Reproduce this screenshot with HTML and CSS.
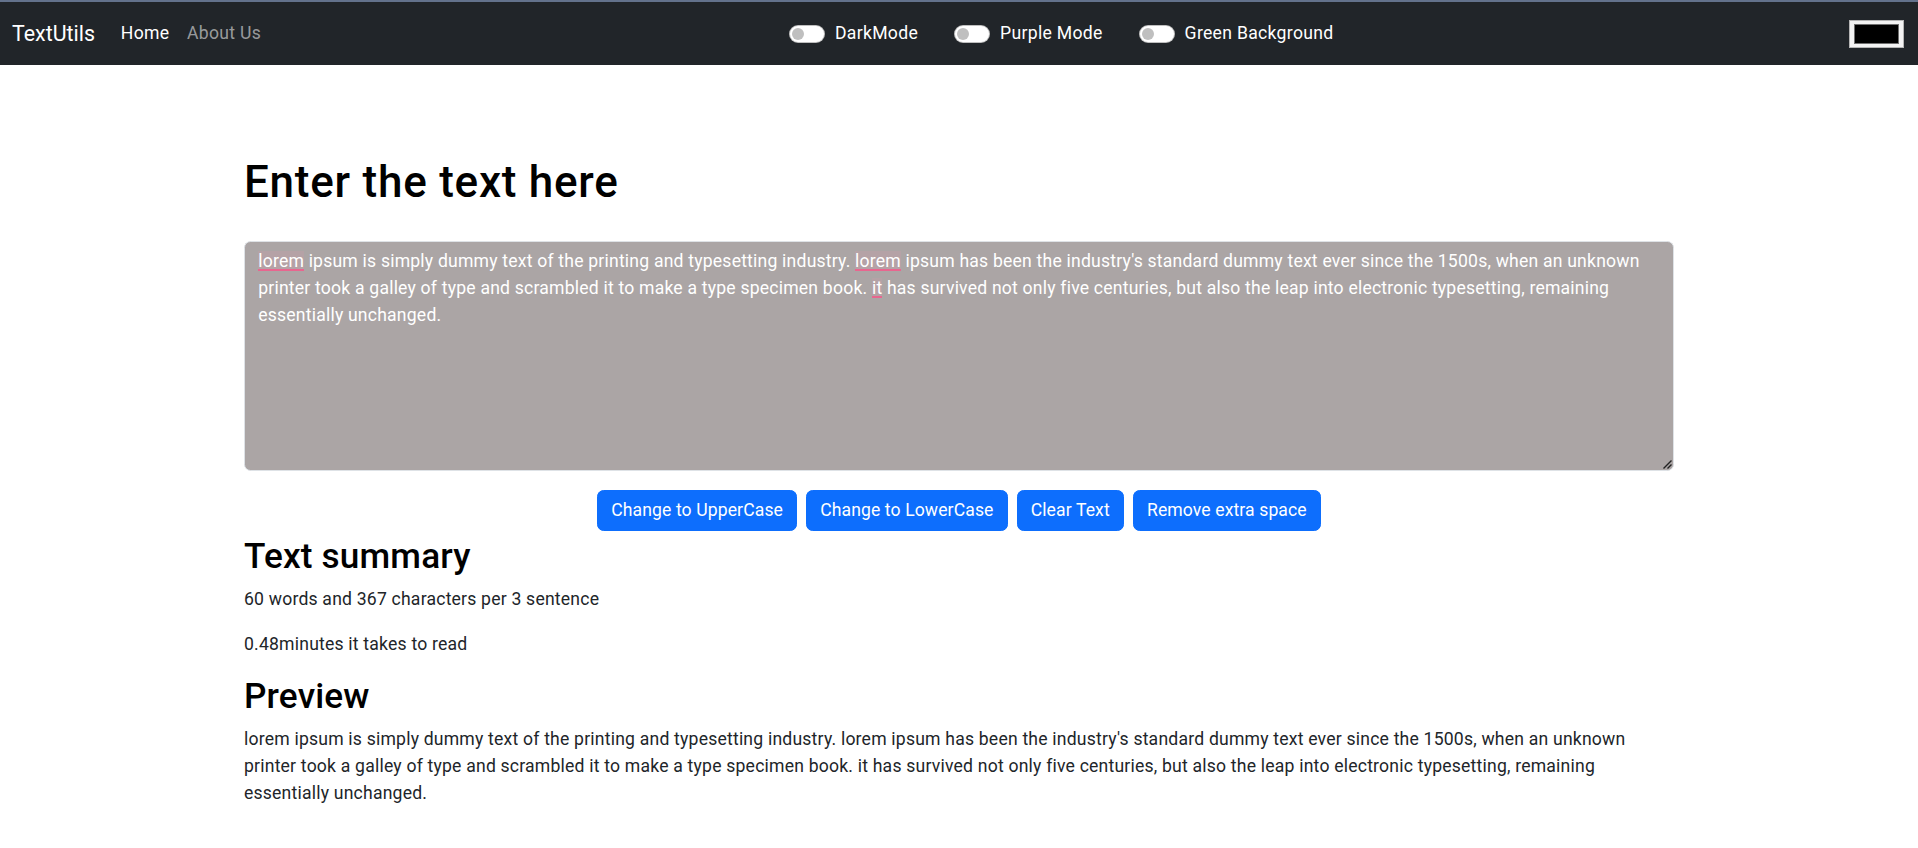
FILE: index.html
```html
<!DOCTYPE html>
<html lang="en">
<head>
<meta charset="utf-8">
<title>TextUtils - Home</title>
<link rel="stylesheet" href="styles.css">
</head>
<body>
<div class="topline"></div>
<nav class="navbar">
  <div class="nav-main">
    <a class="brand" href="#">TextUtils</a>
    <ul class="nav-links">
      <li><a class="nav-link active" href="#">Home</a></li>
      <li><a class="nav-link" href="#">About Us</a></li>
    </ul>
  </div>
  <div class="modes">
    <label class="switch"><span class="track"><span class="knob"></span></span>DarkMode</label>
    <label class="switch"><span class="track"><span class="knob"></span></span>Purple Mode</label>
    <label class="switch"><span class="track"><span class="knob"></span></span>Green Background</label>
  </div>
  <div class="color-box"><span class="swatch"></span></div>
</nav>

<main class="container">
  <h1 class="title">Enter the text here</h1>
  <div class="textbox" role="textbox" aria-multiline="true"><span class="typo">lorem</span> ipsum is simply dummy text of the printing and typesetting industry. <span class="typo">lorem</span> ipsum has been the industry's standard dummy text ever since the 1500s, when an unknown printer took a galley of type and scrambled it to make a type specimen book. <span class="typo">it</span> has survived not only five centuries, but also the leap into electronic typesetting, remaining essentially unchanged.<svg class="grip" width="10" height="10" viewBox="0 0 10 10"><path d="M9.5 1.5 L1.5 9.5 M9.5 5.5 L5.5 9.5" stroke="#222" stroke-width="1.4" fill="none"/></svg></div>
  <div class="actions">
    <button class="btn">Change to UpperCase</button>
    <button class="btn">Change to LowerCase</button>
    <button class="btn">Clear Text</button>
    <button class="btn">Remove extra space</button>
  </div>
  <h2 class="section">Text summary</h2>
  <p class="line">60 words and 367 characters per 3 sentence</p>
  <p class="line">0.48minutes it takes to read</p>
  <h2 class="section section-preview">Preview</h2>
  <p class="line">lorem ipsum is simply dummy text of the printing and typesetting industry. lorem ipsum has been the industry's standard dummy text ever since the 1500s, when an unknown printer took a galley of type and scrambled it to make a type specimen book. it has survived not only five centuries, but also the leap into electronic typesetting, remaining essentially unchanged.</p>
</main>
</body>
</html>
```
FILE: styles.css
```css
* { box-sizing: border-box; }

html, body {
  margin: 0;
  padding: 0;
  background: #fff;
}

body {
  font-family: Roboto, "Liberation Sans", sans-serif;
  font-size: 17.6px;
  line-height: 27px;
  letter-spacing: 0.2px;
  color: #212529;
}

.topline {
  height: 2px;
  background: #63728c;
}

.navbar {
  height: 63px;
  background: #212529;
  display: flex;
  align-items: center;
  padding: 0 14px 0 12px;
  letter-spacing: 0.3px;
}

.nav-main {
  display: flex;
  align-items: center;
  width: 777px;
}

.brand {
  font-size: 21.4px;
  letter-spacing: 0;
  color: #fff;
  text-decoration: none;
  margin-right: 17px;
}

.nav-links {
  display: flex;
  list-style: none;
  margin: 0;
  padding: 0;
}

.nav-link {
  display: block;
  padding: 0 8.8px;
  color: rgba(255, 255, 255, 0.55);
  text-decoration: none;
}

.nav-link.active {
  color: #fff;
}

.modes {
  display: flex;
  align-items: center;
  gap: 36px;
}

.switch {
  display: flex;
  align-items: center;
  color: #fff;
}

.track {
  position: relative;
  width: 36px;
  height: 18px;
  border-radius: 9px;
  background: #fff;
  border: 1px solid rgba(0, 0, 0, 0.25);
  margin-right: 10px;
}

.knob {
  position: absolute;
  left: 2px;
  top: 2px;
  width: 12px;
  height: 12px;
  border-radius: 50%;
  background: #bfbfbf;
}

.color-box {
  margin-left: auto;
  width: 55px;
  height: 28px;
  border: 1px solid #b5b5b5;
  background: #f3f3f3;
  padding: 3px 4px;
  display: flex;
}

.swatch {
  flex: 1;
  background: #000;
  border: 1px solid #6f6f6f;
}

.container {
  max-width: 1430px;
  margin: 0 auto;
}

.title {
  font-size: 44px;
  font-weight: 500;
  line-height: 52.8px;
  letter-spacing: 0.75px;
  margin: 91px 0 32px;
  color: #000;
}

.textbox {
  position: relative;
  height: 230px;
  padding: 6px 13.2px;
  border: 1px solid #dee2e6;
  border-radius: 6.6px;
  background: #aba5a5;
  color: #fff;
  margin-bottom: 19px;
}

.typo {
  background: rgba(255, 140, 170, 0.12);
  box-shadow: inset 0 -2px 0 #e8668f;
}

.grip {
  position: absolute;
  right: 1px;
  bottom: 1px;
}

.actions {
  display: flex;
  justify-content: center;
  gap: 8.8px;
}

.btn {
  font-family: inherit;
  font-size: 17.6px;
  line-height: 26.4px;
  letter-spacing: 0.1px;
  padding: 6.6px 13.2px;
  border: 1px solid #0d6efd;
  border-radius: 6.6px;
  background: #0d6efd;
  color: #fff;
  cursor: pointer;
}

.section {
  font-size: 35.2px;
  font-weight: 500;
  line-height: 42.24px;
  letter-spacing: 0.15px;
  margin: 4px 0 8.4px;
  color: #000;
}

.section-preview {
  margin-top: 9.5px;
}

.line {
  margin: 0 0 17.6px;
}
```
